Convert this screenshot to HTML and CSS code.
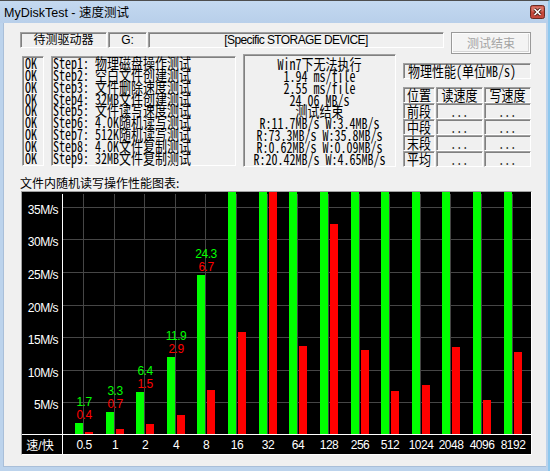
FILE: index.html
```html
<!DOCTYPE html>
<html lang="zh-CN">
<head>
<meta charset="utf-8">
<title>MyDiskTest - 速度测试</title>
<link rel="stylesheet" href="styles.css">
</head>
<body>
<div class="window">
  <div class="titlebar">
    <span class="title">MyDiskTest - 速度测试</span>
    <svg class="close" width="15" height="14" viewBox="0 0 15 14">
      <rect x="0.5" y="0.5" width="14" height="13" rx="2" fill="#c4483c" stroke="#6a2a22"/>
      <rect x="1.5" y="1.5" width="12" height="5" rx="1" fill="#e59585" opacity="0.6"/>
      <path d="M4.5 4 L10.5 10 M10.5 4 L4.5 10" stroke="#4a1c16" stroke-width="3.2"/>
      <path d="M4.5 4 L10.5 10 M10.5 4 L4.5 10" stroke="#fff" stroke-width="1.6"/>
    </svg>
  </div>
  <div class="client">
    <div class="row-top">
      <div class="field sunken f-label">待测驱动器</div>
      <div class="field sunken f-drive">G:</div>
      <div class="field sunken f-device">[Specific STORAGE DEVICE]</div>
      <button class="btn" disabled>测试结束</button>
    </div>
    <div class="row-mid">
      <div class="sunken ok-box lcd"><div class="sq">OK
OK
OK
OK
OK
OK
OK
OK
OK</div></div>
      <div class="sunken step-box lcd"><div class="sq">Step1: 物理磁盘操作测试
Step2: 空白文件创建测试
Step3: 文件删除速度测试
Step4: 32MB文件创建测试
Step5: 文件读写速度测试
Step6: 4.0K随机读写测试
Step7: 512K随机读写测试
Step8: 4.0K文件复制测试
Step9: 32MB文件复制测试</div></div>
      <div class="sunken result-box lcd"><div class="sq center">Win7下无法执行
1.94 ms/file
2.55 ms/file
24.06 MB/s
测试结束
R:11.7MB/s W:3.4MB/s
R:73.3MB/s W:35.8MB/s
R:0.62MB/s W:0.09MB/s
R:20.42MB/s W:4.65MB/s</div></div>
      <div class="perf">
        <div class="sunken perf-title lcd"><span class="sqi left">物理性能(单位MB/s)</span></div>
        <div class="perf-table lcd">
          <div class="cell sunken"><span class="sqi">位置</span></div>
          <div class="cell sunken"><span class="sqi">读速度</span></div>
          <div class="cell sunken"><span class="sqi">写速度</span></div>
          <div class="cell sunken"><span class="sqi">前段</span></div>
          <div class="cell sunken dots"><span class="sqi">...</span></div>
          <div class="cell sunken dots"><span class="sqi">...</span></div>
          <div class="cell sunken"><span class="sqi">中段</span></div>
          <div class="cell sunken dots"><span class="sqi">...</span></div>
          <div class="cell sunken dots"><span class="sqi">...</span></div>
          <div class="cell sunken"><span class="sqi">末段</span></div>
          <div class="cell sunken dots"><span class="sqi">...</span></div>
          <div class="cell sunken dots"><span class="sqi">...</span></div>
          <div class="cell sunken"><span class="sqi">平均</span></div>
          <div class="cell sunken dots"><span class="sqi">...</span></div>
          <div class="cell sunken dots"><span class="sqi">...</span></div>
        </div>
      </div>
    </div>
    <div class="chart-label">文件内随机读写操作性能图表:</div>
    <div class="chart">
      <svg width="509" height="262" viewBox="21 192 509 262">
        <g class="grid">
          <line x1="62" x2="530" y1="207.5" y2="207.5"/>
          <line x1="62" x2="530" y1="239.5" y2="239.5"/>
          <line x1="62" x2="530" y1="272.5" y2="272.5"/>
          <line x1="62" x2="530" y1="305.5" y2="305.5"/>
          <line x1="62" x2="530" y1="337.5" y2="337.5"/>
          <line x1="62" x2="530" y1="370.5" y2="370.5"/>
          <line x1="62" x2="530" y1="402.5" y2="402.5"/>
          <line x1="82.5" x2="82.5" y1="194" y2="434"/>
          <line x1="113.5" x2="113.5" y1="194" y2="434"/>
          <line x1="143.5" x2="143.5" y1="194" y2="434"/>
          <line x1="174.5" x2="174.5" y1="194" y2="434"/>
          <line x1="204.5" x2="204.5" y1="194" y2="434"/>
          <line x1="235.5" x2="235.5" y1="194" y2="434"/>
          <line x1="266.5" x2="266.5" y1="194" y2="434"/>
          <line x1="296.5" x2="296.5" y1="194" y2="434"/>
          <line x1="327.5" x2="327.5" y1="194" y2="434"/>
          <line x1="358.5" x2="358.5" y1="194" y2="434"/>
          <line x1="388.5" x2="388.5" y1="194" y2="434"/>
          <line x1="419.5" x2="419.5" y1="194" y2="434"/>
          <line x1="449.5" x2="449.5" y1="194" y2="434"/>
          <line x1="480.5" x2="480.5" y1="194" y2="434"/>
          <line x1="511.5" x2="511.5" y1="194" y2="434"/>
        </g>
        <g class="read">
          <rect x="74" y="423" width="8" height="11"/>
          <rect x="105" y="412" width="8" height="22"/>
          <rect x="135" y="392" width="8" height="42"/>
          <rect x="166" y="357" width="8" height="77"/>
          <rect x="196" y="275" width="8" height="159"/>
          <rect x="227" y="192" width="8" height="242"/>
          <rect x="258" y="192" width="8" height="242"/>
          <rect x="288" y="192" width="8" height="242"/>
          <rect x="319" y="192" width="8" height="242"/>
          <rect x="350" y="192" width="8" height="242"/>
          <rect x="380" y="192" width="8" height="242"/>
          <rect x="411" y="192" width="8" height="242"/>
          <rect x="441" y="192" width="8" height="242"/>
          <rect x="472" y="192" width="8" height="242"/>
          <rect x="503" y="192" width="8" height="242"/>
        </g>
        <g class="write">
          <rect x="84" y="432" width="8" height="2"/>
          <rect x="115" y="429" width="8" height="5"/>
          <rect x="145" y="424" width="8" height="10"/>
          <rect x="176" y="415" width="8" height="19"/>
          <rect x="206" y="390" width="8" height="44"/>
          <rect x="237" y="332" width="8" height="102"/>
          <rect x="268" y="192" width="8" height="242"/>
          <rect x="298" y="346" width="8" height="88"/>
          <rect x="329" y="224" width="8" height="210"/>
          <rect x="360" y="350" width="8" height="84"/>
          <rect x="390" y="391" width="8" height="43"/>
          <rect x="421" y="385" width="8" height="49"/>
          <rect x="451" y="347" width="8" height="87"/>
          <rect x="482" y="400" width="8" height="34"/>
          <rect x="513" y="352" width="8" height="82"/>
        </g>
        <g class="axis">
          <line x1="61.5" x2="61.5" y1="194" y2="454"/>
          <line x1="21" x2="530" y1="434.5" y2="434.5"/>
        </g>
        <g class="vlabel read-label">
          <text x="83" y="405.5">1.7</text>
          <text x="114" y="394.5">3.3</text>
          <text x="144" y="374.5">6.4</text>
          <text x="175" y="339.5">11.9</text>
          <text x="205" y="257.5">24.3</text>
        </g>
        <g class="vlabel write-label">
          <text x="83" y="418.5">0.4</text>
          <text x="114" y="407.5">0.7</text>
          <text x="144" y="387.5">1.5</text>
          <text x="175" y="352.5">2.9</text>
          <text x="205" y="270.5">6.7</text>
        </g>
        <g class="ylabel">
          <text x="57" y="213.5">35M/s</text>
          <text x="57" y="245.5">30M/s</text>
          <text x="57" y="278.5">25M/s</text>
          <text x="57" y="311.5">20M/s</text>
          <text x="57" y="343.5">15M/s</text>
          <text x="57" y="376.5">10M/s</text>
          <text x="57" y="408.5">5M/s</text>
        </g>
        <g class="xlabel">
          <text class="xtitle" x="39" y="450">速/快</text>
          <text x="83" y="449">0.5</text>
          <text x="114" y="449">1</text>
          <text x="144" y="449">2</text>
          <text x="175" y="449">4</text>
          <text x="205" y="449">8</text>
          <text x="236" y="449">16</text>
          <text x="267" y="449">32</text>
          <text x="297" y="449">64</text>
          <text x="328" y="449">128</text>
          <text x="359" y="449">256</text>
          <text x="389" y="449">512</text>
          <text x="420" y="449">1024</text>
          <text x="450" y="449">2048</text>
          <text x="481" y="449">4096</text>
          <text x="512" y="449">8192</text>
        </g>
      </svg>
    </div>
  </div>
</div>
</body>
</html>
```
FILE: styles.css
```css
* { box-sizing: border-box; }
html, body { margin: 0; padding: 0; }
body {
  width: 550px;
  height: 471px;
  overflow: hidden;
  font-family: "Liberation Sans", "Noto Sans CJK SC", sans-serif;
  font-size: 12px;
  color: #000;
  background: #bcd3ec;
}
.window {
  width: 550px;
  height: 471px;
  display: flex;
  flex-direction: column;
  background: #bcd3ec;
  border-top: 1px solid #4e4e4e;
  border-right: 2px solid #8ec8ee;
}
.titlebar {
  height: 22px;
  flex: none;
  display: flex;
  align-items: center;
  justify-content: space-between;
  padding: 0 3px 0 4px;
  background: linear-gradient(#c4d9f0, #b8cfea);
}
.title {
  font-size: 12.5px;
  line-height: 14px;
  padding-top: 2px;
  color: #000;
}
.close { display: block; }
.client {
  flex: 1;
  margin: 0 2px 4px 3px;
  background: #f0f0f0;
  padding: 9px 0 0 17px;
  border-left: 1px solid #a9bfd9;
  border-bottom: 1px solid #a9bfd9;
}
.sunken {
  border: 1px solid;
  border-color: #a0a0a0 #fff #fff #a0a0a0;
  box-shadow: inset 1px 1px 0 #808080;
}
.row-top {
  display: flex;
  align-items: flex-start;
  height: 22px;
  margin-left: -1px;
}
.field {
  height: 16px;
  display: flex;
  align-items: center;
  justify-content: center;
  line-height: 14px;
  white-space: nowrap;
}
.f-label { width: 87px; margin-right: 1px; }
.f-drive { width: 39px; margin-right: 1px; }
.f-device { width: 296px; margin-right: 7px; letter-spacing: -0.6px; }
.btn {
  width: 80px;
  height: 22px;
  padding: 0;
  margin: 0;
  border: 1px solid #9a9a9a;
  border-radius: 0;
  background: #f4f4f4;
  box-shadow: inset 0 0 0 1px #fcfcfc, inset -1px -1px 0 1px #d6d6d6;
  color: #a3a3a3;
  font-family: "Noto Sans CJK SC", sans-serif;
  font-size: 12px;
  line-height: 14px;
}
.row-mid {
  display: flex;
  align-items: flex-start;
  margin-left: -1px;
}
.lcd {
  font-family: "Noto Sans Mono CJK SC", "Liberation Mono", "Noto Sans CJK SC", monospace;
  font-size: 15px;
  line-height: 11.85px;
  color: #000;
}
.sq {
  white-space: pre;
  transform: scaleX(0.8);
  transform-origin: 0 0;
  width: 125%;
}
.sq.center { text-align: center; }
.sqi {
  display: inline-block;
  white-space: pre;
  transform: scaleX(0.8);
}
.sqi.left { transform-origin: 0 50%; }
.ok-box {
  margin: 2px 0 0 2px;
  width: 22px;
  height: 110px;
  padding: 0 0 0 2px;
}
.step-box {
  margin: 2px 0 0 7px;
  width: 185px;
  height: 110px;
  padding: 0 0 0 1px;
}
.result-box {
  margin-left: 7px;
  width: 153px;
  height: 113px;
  padding-top: 3px;
}
.perf {
  margin-left: 7px;
  width: 128px;
}
.perf-title {
  margin-top: 9px;
  height: 16px;
  padding-left: 4px;
  display: flex;
  align-items: center;
  white-space: nowrap;
}
.perf-table {
  margin-top: 8px;
  display: grid;
  grid-template-columns: 32px 47px 47px;
  grid-auto-rows: 16px;
  column-gap: 1px;
}
.cell {
  display: flex;
  align-items: center;
  justify-content: center;
  white-space: nowrap;
}
.cell.dots { color: #333; }
.chart-label {
  margin-top: 8px;
  height: 16px;
  line-height: 16px;
  font-size: 12px;
  font-family: "Noto Sans CJK SC", sans-serif;
  margin-left: -1px;
}
.chart {
  width: 511px;
  height: 264px;
  border: 1px solid;
  border-color: #a0a0a0 #fff #fff #a0a0a0;
  background: #000;
}
.chart svg { display: block; }
.grid line { stroke: #464646; stroke-width: 1; }
.axis line { stroke: #fff; stroke-width: 1; }
.read rect { fill: #00ff00; }
.write rect { fill: #ff0000; }
.chart text {
  font-family: "Liberation Sans", "Noto Sans CJK SC", sans-serif;
  font-size: 12px;
  letter-spacing: -0.5px;
}
.vlabel text, .xlabel text { text-anchor: middle; }
.read-label text { fill: #00ff00; }
.write-label text { fill: #ff0000; }
.ylabel text { fill: #fff; text-anchor: end; }
.xlabel text { fill: #fff; }
.xlabel .xtitle { font-size: 12px; letter-spacing: 0; }
```
